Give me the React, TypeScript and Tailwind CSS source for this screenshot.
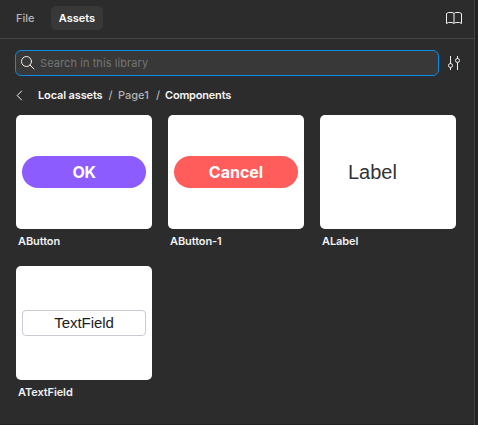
import type { ReactNode } from "react";

function AssetCard({ name, children }: { name: string; children: ReactNode }) {
  return (
    <div className="h-[151px] w-[136px]">
      <div className="flex h-[114px] items-center justify-center rounded-[5px] bg-white">{children}</div>
      <div className="mt-1 pl-[2px] text-[11px] font-semibold leading-4 tracking-[-0.1px] text-[#f0f0f0]">{name}</div>
    </div>
  );
}

export default function App() {
  return (
    <div className="flex h-[425px] w-[478px] overflow-hidden bg-[#222222] font-['Inter',sans-serif]">
      <div className="flex w-[475px] flex-col border-r border-[#444444] bg-[#2c2c2c]">
        <header className="flex h-[39px] shrink-0 items-center border-b border-[#444444] pb-[2px] pl-4 pr-[12px] text-[11px]">
          <span className="w-[35px] font-medium text-[#b8b8b8]">File</span>
          <span className="flex h-6 w-[52px] items-center justify-center rounded-[5px] bg-[#383838] font-semibold text-white">
            Assets
          </span>
          <svg className="ml-auto" width="16" height="14" viewBox="0 0 16 14" fill="none" stroke="#f2f2f2" strokeLinejoin="round">
            <path d="M8 2.500C7.500 1.700 6.500 1.500 5 1.500H2.500L.5 2.500v10l2-1H5c1.500 0 2.500.2 3 1 .5-.8 1.500-1 3-1h2.500l2 1v-10l-2-1H11c-1.500 0-2.500.2-3 1v10" />
          </svg>
        </header>

        <div className="mt-[11px] flex h-[26px] shrink-0 items-center pl-[15px]">
          <div className="flex h-[26px] w-[424px] items-center rounded-[6px] border border-[#0c8ce9] bg-[#383838] pl-[4px] text-[11px] text-[#757575]">
            <svg width="16" height="16" viewBox="0 0 16 16" fill="none" stroke="#f2f2f2" strokeLinecap="round">
              <circle cx="6.500" cy="6.500" r="5" />
              <path d="m10.100 10.100 3.900 3.900" />
            </svg>
            <span className="ml-[4px] tracking-[0.08px]">Search in this library</span>
          </div>
          <svg className="ml-[8px]" width="14" height="16" viewBox="0 0 14 16" fill="none" stroke="#f2f2f2">
            <path d="M3.500 1v7.500m0 4V15M10.500 1v2.500m0 4V15" />
            <circle cx="3.500" cy="10.500" r="2" />
            <circle cx="10.500" cy="5.500" r="2" />
          </svg>
        </div>

        <nav className="mt-[11px] flex h-4 shrink-0 items-center pl-4 text-[11px] font-semibold leading-4 tracking-[-0.14px] text-[#f5f5f5]">
          <svg className="mr-[15px]" width="7" height="11" viewBox="0 0 7 11" fill="none" stroke="#f2f2f2">
            <path d="M5.800.8 1.200 5.500l4.600 4.700" />
          </svg>
          <span className="w-[65px] whitespace-nowrap">Local assets</span>
          <span className="w-[15px] text-center font-medium text-[#b3b3b3]">/</span>
          <span className="w-[33px] font-medium tracking-normal text-[#b3b3b3]">Page1</span>
          <span className="w-[14px] text-center font-medium text-[#b3b3b3]">/</span>
          <span className="tracking-[-0.2px]">Components</span>
        </nav>

        <main className="mt-[12px] grid grid-cols-[136px_136px_136px] gap-x-4 pl-4">
          <AssetCard name="AButton">
            <div className="flex h-8 w-[124px] items-center justify-center rounded-full bg-[#8c5cff] text-[16px] font-bold tracking-[-0.3px] text-white">OK</div>
          </AssetCard>
          <AssetCard name="AButton-1">
            <div className="flex h-8 w-[124px] items-center justify-center rounded-full bg-[#ff5c5c] text-[16px] font-bold text-white">Cancel</div>
          </AssetCard>
          <AssetCard name="ALabel">
            <div className="w-20 font-['Liberation_Sans',Arial,sans-serif] text-[20px] text-[#333333]">Label</div>
          </AssetCard>
          <AssetCard name="ATextField">
            <div className="flex h-[26px] w-[124px] items-center justify-center rounded-[4px] border border-[#c9c8d3] font-['Liberation_Sans',Arial,sans-serif] text-[15px] tracking-[-0.05px] text-[#1c1c1c]">
              TextField
            </div>
          </AssetCard>
        </main>
        <div className="mt-auto h-px shrink-0 bg-[#232323]" />
      </div>
    </div>
  );
}
